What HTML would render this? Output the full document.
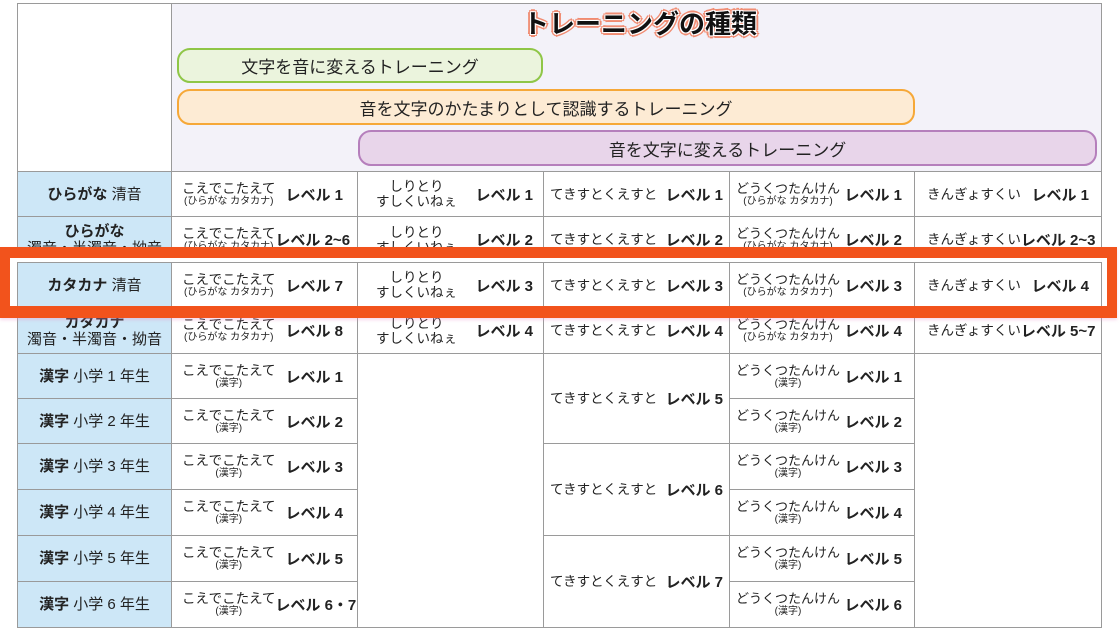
<!DOCTYPE html>
<html><head><meta charset="utf-8"><style>
*{margin:0;padding:0;box-sizing:border-box}
body{width:1120px;height:630px;background:#fff;position:relative;overflow:hidden;font-family:"Liberation Sans","Noto Sans CJK JP",sans-serif;color:#222}
.c{position:absolute;border:1px solid #9a9a9a;background:#fff;display:flex;align-items:center;justify-content:space-between;white-space:nowrap;overflow:hidden}
.h{background:#cde7f7;justify-content:center;font-size:15px;text-align:center;line-height:17px;flex-direction:column}
.h b{font-weight:bold}
.t{text-align:center;font-size:13.5px;line-height:15px;white-space:nowrap;flex-shrink:0}
.t small{display:block;font-size:10px;line-height:12px}
.lv{font-weight:bold;font-size:15px;white-space:nowrap;flex-shrink:0}
.c2{padding:0 14px 0 10px}
.c3{padding:0 10px 0 18px}
.c4{padding:0 6px 0 6px}
.c5{padding:0 12px 0 6px}
.c5 .t{font-size:13px}
.c6{padding:0 12px 0 12px}
.pill{position:absolute;border-radius:13px;font-size:17px;display:flex;align-items:center;justify-content:center;border:2.5px solid}
</style></head><body>
<div class="c" style="left:17px;top:3px;width:155px;height:169px"></div>
<div class="c" style="left:171px;top:3px;width:931px;height:169px;background:#f3f2f9"></div>
<div style="position:absolute;left:420px;width:440px;top:4px;text-align:center;font-size:26px;font-weight:bold;color:#111;text-shadow:0 0 2px #fff,1px 1px 0 #fff,-1px -1px 0 #fff,1px -1px 0 #fff,-1px 1px 0 #fff,2px 2px 0 #f08a70,-2px -2px 0 #f08a70,2px -2px 0 #f08a70,-2px 2px 0 #f08a70,0 3px 0 #f08a70,0 -3px 0 #f08a70,3px 0 0 #f08a70,-3px 0 0 #f08a70">トレーニングの種類</div>
<div class="pill" style="left:177px;top:48px;width:366px;height:35px;background:#ebf4dd;border-color:#8fc647">文字を音に変えるトレーニング</div>
<div class="pill" style="left:177px;top:89px;width:738px;height:36px;background:#fdebd4;border-color:#f6a838">音を文字のかたまりとして認識するトレーニング</div>
<div class="pill" style="left:358px;top:130px;width:739px;height:36px;background:#e8d5ea;border-color:#b57fbc">音を文字に変えるトレーニング</div>

<!-- row 1 -->
<div class="c h" style="left:17px;top:171px;width:155px;height:46px"><div><b>ひらがな</b> 清音</div></div>
<div class="c c2" style="left:171px;top:171px;width:187px;height:46px"><div class="t">こえでこたえて<small>(ひらがな カタカナ)</small></div><span class="lv">レベル 1</span></div>
<div class="c c3" style="left:357px;top:171px;width:187px;height:46px"><div class="t">しりとり<br>すしくいねぇ</div><span class="lv">レベル 1</span></div>
<div class="c c4" style="left:543px;top:171px;width:187px;height:46px"><div class="t">てきすとくえすと</div><span class="lv">レベル 1</span></div>
<div class="c c5" style="left:729px;top:171px;width:186px;height:46px"><div class="t">どうくつたんけん<small>(ひらがな カタカナ)</small></div><span class="lv">レベル 1</span></div>
<div class="c c6" style="left:914px;top:171px;width:188px;height:46px"><div class="t">きんぎょすくい</div><span class="lv">レベル 1</span></div>
<!-- row 2 -->
<div class="c h" style="left:17px;top:216px;width:155px;height:47px"><div><b>ひらがな</b><br>濁音・半濁音・拗音</div></div>
<div class="c c2" style="left:171px;top:216px;width:187px;height:47px;padding-right:8px"><div class="t">こえでこたえて<small>(ひらがな カタカナ)</small></div><span class="lv">レベル 2~6</span></div>
<div class="c c3" style="left:357px;top:216px;width:187px;height:47px"><div class="t">しりとり<br>すしくいねぇ</div><span class="lv">レベル 2</span></div>
<div class="c c4" style="left:543px;top:216px;width:187px;height:47px"><div class="t">てきすとくえすと</div><span class="lv">レベル 2</span></div>
<div class="c c5" style="left:729px;top:216px;width:186px;height:47px"><div class="t">どうくつたんけん<small>(ひらがな カタカナ)</small></div><span class="lv">レベル 2</span></div>
<div class="c c6" style="left:914px;top:216px;width:188px;height:47px;padding-right:8px"><div class="t">きんぎょすくい</div><span class="lv">レベル 2~3</span></div>
<!-- row 4 -->
<div class="c h" style="left:17px;top:307px;width:155px;height:47px"><div><b>カタカナ</b><br>濁音・半濁音・拗音</div></div>
<div class="c c2" style="left:171px;top:307px;width:187px;height:47px"><div class="t">こえでこたえて<small>(ひらがな カタカナ)</small></div><span class="lv">レベル 8</span></div>
<div class="c c3" style="left:357px;top:307px;width:187px;height:47px"><div class="t">しりとり<br>すしくいねぇ</div><span class="lv">レベル 4</span></div>
<div class="c c4" style="left:543px;top:307px;width:187px;height:47px"><div class="t">てきすとくえすと</div><span class="lv">レベル 4</span></div>
<div class="c c5" style="left:729px;top:307px;width:186px;height:47px"><div class="t">どうくつたんけん<small>(ひらがな カタカナ)</small></div><span class="lv">レベル 4</span></div>
<div class="c c6" style="left:914px;top:307px;width:188px;height:47px;padding-right:8px"><div class="t">きんぎょすくい</div><span class="lv">レベル 5~7</span></div>

<!-- kanji rows -->
<div class="c h" style="left:17px;top:353px;width:155px;height:46px"><div><b>漢字</b> 小学 1 年生</div></div>
<div class="c h" style="left:17px;top:398px;width:155px;height:46px"><div><b>漢字</b> 小学 2 年生</div></div>
<div class="c h" style="left:17px;top:443px;width:155px;height:47px"><div><b>漢字</b> 小学 3 年生</div></div>
<div class="c h" style="left:17px;top:489px;width:155px;height:47px"><div><b>漢字</b> 小学 4 年生</div></div>
<div class="c h" style="left:17px;top:535px;width:155px;height:47px"><div><b>漢字</b> 小学 5 年生</div></div>
<div class="c h" style="left:17px;top:581px;width:155px;height:47px"><div><b>漢字</b> 小学 6 年生</div></div>

<div class="c c2" style="left:171px;top:353px;width:187px;height:46px"><div class="t">こえでこたえて<small>(漢字)</small></div><span class="lv">レベル 1</span></div>
<div class="c c2" style="left:171px;top:398px;width:187px;height:46px"><div class="t">こえでこたえて<small>(漢字)</small></div><span class="lv">レベル 2</span></div>
<div class="c c2" style="left:171px;top:443px;width:187px;height:47px"><div class="t">こえでこたえて<small>(漢字)</small></div><span class="lv">レベル 3</span></div>
<div class="c c2" style="left:171px;top:489px;width:187px;height:47px"><div class="t">こえでこたえて<small>(漢字)</small></div><span class="lv">レベル 4</span></div>
<div class="c c2" style="left:171px;top:535px;width:187px;height:47px"><div class="t">こえでこたえて<small>(漢字)</small></div><span class="lv">レベル 5</span></div>
<div class="c c2" style="left:171px;top:581px;width:187px;height:47px;padding-right:6px"><div class="t">こえでこたえて<small>(漢字)</small></div><span class="lv">レベル 6・7</span></div>

<div class="c" style="left:357px;top:353px;width:187px;height:275px"></div>
<div class="c c4" style="left:543px;top:353px;width:187px;height:91px"><div class="t">てきすとくえすと</div><span class="lv">レベル 5</span></div>
<div class="c c4" style="left:543px;top:443px;width:187px;height:93px"><div class="t">てきすとくえすと</div><span class="lv">レベル 6</span></div>
<div class="c c4" style="left:543px;top:535px;width:187px;height:93px"><div class="t">てきすとくえすと</div><span class="lv">レベル 7</span></div>

<div class="c c5" style="left:729px;top:353px;width:186px;height:46px"><div class="t">どうくつたんけん<small>(漢字)</small></div><span class="lv">レベル 1</span></div>
<div class="c c5" style="left:729px;top:398px;width:186px;height:46px"><div class="t">どうくつたんけん<small>(漢字)</small></div><span class="lv">レベル 2</span></div>
<div class="c c5" style="left:729px;top:443px;width:186px;height:47px"><div class="t">どうくつたんけん<small>(漢字)</small></div><span class="lv">レベル 3</span></div>
<div class="c c5" style="left:729px;top:489px;width:186px;height:47px"><div class="t">どうくつたんけん<small>(漢字)</small></div><span class="lv">レベル 4</span></div>
<div class="c c5" style="left:729px;top:535px;width:186px;height:47px"><div class="t">どうくつたんけん<small>(漢字)</small></div><span class="lv">レベル 5</span></div>
<div class="c c5" style="left:729px;top:581px;width:186px;height:47px"><div class="t">どうくつたんけん<small>(漢字)</small></div><span class="lv">レベル 6</span></div>
<div class="c" style="left:914px;top:353px;width:188px;height:275px"></div>

<!-- highlight box -->
<div style="position:absolute;left:0;top:247px;width:1117px;height:71px;border:10px solid #f2531c;background:#fff;box-shadow:0 2px 3px rgba(230,150,200,.35)"></div>
<div class="c h" style="left:17px;top:262px;width:155px;height:46px"><div><b>カタカナ</b> 清音</div></div>
<div class="c c2" style="left:171px;top:262px;width:187px;height:46px"><div class="t">こえでこたえて<small>(ひらがな カタカナ)</small></div><span class="lv">レベル 7</span></div>
<div class="c c3" style="left:357px;top:262px;width:187px;height:46px"><div class="t">しりとり<br>すしくいねぇ</div><span class="lv">レベル 3</span></div>
<div class="c c4" style="left:543px;top:262px;width:187px;height:46px"><div class="t">てきすとくえすと</div><span class="lv">レベル 3</span></div>
<div class="c c5" style="left:729px;top:262px;width:186px;height:46px"><div class="t">どうくつたんけん<small>(ひらがな カタカナ)</small></div><span class="lv">レベル 3</span></div>
<div class="c c6" style="left:914px;top:262px;width:188px;height:46px"><div class="t">きんぎょすくい</div><span class="lv">レベル 4</span></div>
<div style="position:absolute;left:0;top:306px;width:1117px;height:12px;background:#f2531c"></div>
<div style="position:absolute;left:0;top:248px;width:1117px;height:10px;background:#f2531c"></div>
</body></html>
